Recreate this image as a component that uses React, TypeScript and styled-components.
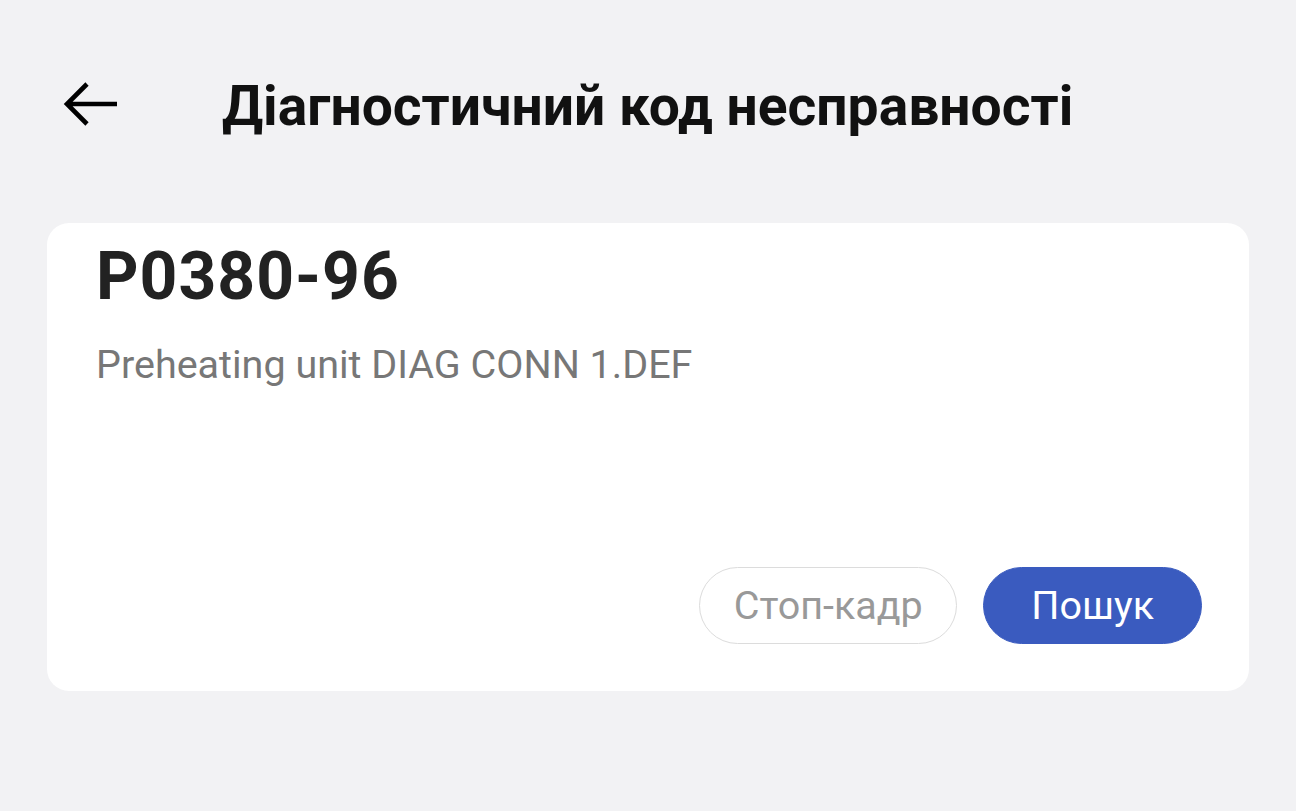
import React from "react";
import styled, { createGlobalStyle } from "styled-components";

const Global = createGlobalStyle`
  html, body { margin: 0; padding: 0; background: #f2f2f4; }
  body { font-family: Roboto, "Noto Sans", sans-serif; -webkit-font-smoothing: antialiased; }
`;

const Page = styled.div`
  width: 1296px;
  height: 811px;
  box-sizing: border-box;
  background: #f2f2f4;
  padding: 0 47px;
  display: flex;
  flex-direction: column;
`;

const Header = styled.header`
  height: 210px;
  display: flex;
  align-items: center;
  padding-bottom: 2px;
  box-sizing: border-box;
`;

const BackButton = styled.button`
  border: 0;
  background: none;
  padding: 0;
  margin-left: 15px;
  width: 58px;
  height: 50px;
  display: flex;
  align-items: center;
  justify-content: center;
  cursor: pointer;
`;

const Title = styled.h1`
  margin: 4px 0 0 102px;
  font-family: Roboto, sans-serif;
  font-weight: 700;
  font-size: 55.2px;
  color: #111;
`;

const Card = styled.section`
  margin-top: 13px;
  background: #fff;
  border-radius: 22px;
  height: 468px;
  box-sizing: border-box;
  padding: 15px 47px 47px 49px;
  display: flex;
  flex-direction: column;
`;

const Code = styled.div`
  font-family: Roboto, sans-serif;
  font-weight: 700;
  font-size: 66px;
  line-height: 78px;
  letter-spacing: 1px;
  color: #222;
`;

const Description = styled.div`
  margin-top: 25px;
  font-size: 39.5px;
  line-height: 48px;
  color: #777;
`;

const Actions = styled.div`
  margin-top: auto;
  display: flex;
  justify-content: flex-end;
  gap: 26px;
`;

const Pill = styled.button<{ $primary?: boolean }>`
  height: 77px;
  border-radius: 39px;
  padding: 0 ${(p) => (p.$primary ? "47px" : "33.5px")};
  font-family: Roboto, sans-serif;
  font-size: 39.5px;
  box-sizing: border-box;
  border: 1.5px solid ${(p) => (p.$primary ? "#3a5bbf" : "#dcdcdc")};
  background: ${(p) => (p.$primary ? "#3a5bbf" : "#fff")};
  color: ${(p) => (p.$primary ? "#fff" : "#999")};
  cursor: pointer;
`;

export default function App() {
  return (
    <>
      <Global />
      <Page>
        <Header>
          <BackButton aria-label="Back">
            <svg width="56" height="48" viewBox="0 0 56 48" fill="none">
              <path d="M4 24 H54 M24 4 L4 24 L24 44" stroke="#000" strokeWidth="4.6" strokeLinecap="butt" strokeLinejoin="miter" />
            </svg>
          </BackButton>
          <Title>Діагностичний код несправності</Title>
        </Header>
        <Card>
          <Code>P0380-96</Code>
          <Description>Preheating unit DIAG CONN 1.DEF</Description>
          <Actions>
            <Pill>Стоп-кадр</Pill>
            <Pill $primary>Пошук</Pill>
          </Actions>
        </Card>
      </Page>
    </>
  );
}
